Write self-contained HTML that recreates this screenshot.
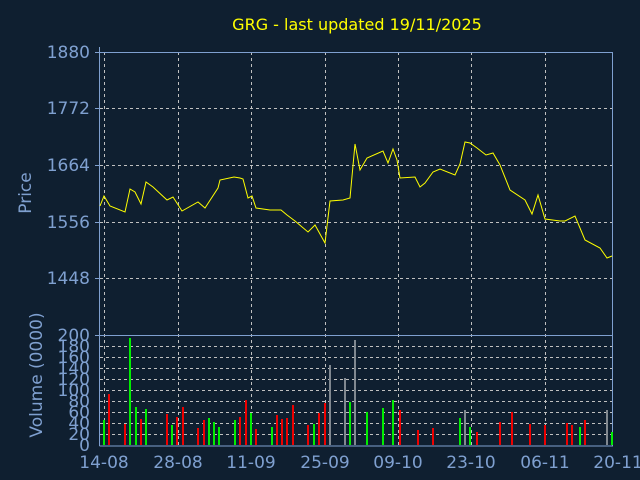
<!DOCTYPE html>
<html><head><meta charset="utf-8"><style>
html,body{margin:0;padding:0;background:#0f1f30;}
svg{display:block}
text{font-family:"DejaVu Sans","Liberation Sans",sans-serif;}
</style></head><body>
<svg width="640" height="480" viewBox="0 0 640 480" xmlns="http://www.w3.org/2000/svg">
<rect width="640" height="480" fill="#0f1f30"/>
<text x="357" y="30" fill="#ffff00" font-size="16" text-anchor="middle">GRG - last updated 19/11/2025</text>
<g stroke="#c0c0c0" stroke-width="1" stroke-dasharray="3,3" fill="none">
<path d="M100 108.5H613M100 165.5H613M100 222.5H613M100 278.5H613"/>
<path d="M100 346.5H613M100 357.5H613M100 368.5H613M100 379.5H613M100 390.5H613M100 401.5H613M100 412.5H613M100 423.5H613M100 434.5H613"/>
<path d="M104.5 52V445M178.5 52V445M251.5 52V445M325.5 52V445M398.5 52V445M471.5 52V445M545.5 52V445"/>
</g>
<g stroke="#7fa0d0" stroke-width="1" fill="none">
<path d="M99.5 47V446M99.5 446H613M99.5 335.5H613M99.5 52.5H613M612.5 52V446"/>
<path d="M95 52.5H100M95 108.5H100M95 165.5H100M95 222.5H100M95 278.5H100M95 335.5H100"/>
</g>
<g fill="#7fa0d0" font-size="17" text-anchor="end">
<text x="90" y="58">1880</text><text x="90" y="114">1772</text><text x="90" y="171">1664</text><text x="90" y="228">1556</text><text x="90" y="284">1448</text><text x="90" y="341">200</text>
<text x="90" y="352">180</text><text x="90" y="363">160</text><text x="90" y="374">140</text><text x="90" y="385">120</text><text x="90" y="396">100</text><text x="90" y="407">80</text><text x="90" y="418">60</text><text x="90" y="429">40</text><text x="90" y="440">20</text><text x="90" y="451">0</text>
</g>
<g fill="#7fa0d0" font-size="17" text-anchor="middle">
<text x="104" y="468">14-08</text><text x="178" y="468">28-08</text><text x="251" y="468">11-09</text><text x="325" y="468">25-09</text><text x="398" y="468">09-10</text><text x="471" y="468">23-10</text><text x="545" y="468">06-11</text><text x="618" y="468">20-11</text>
</g>
<text transform="translate(31,193) rotate(-90)" fill="#7fa0d0" font-size="17" text-anchor="middle">Price</text>
<text transform="translate(42,375) rotate(-90)" fill="#7fa0d0" font-size="17" text-anchor="middle">Volume (0000)</text>
<polyline fill="none" stroke="#ffff00" stroke-width="1" points="100,206 104,196 110,206 125,212 130,189 135,192 141,204 146,182 153,187 167,200 173,197 182,211 198,202 205,208 218,188 220,180 234,177 240,178 243,179 248,198 252,196 256,208 270,210 281,210 287,215 295,221 308,232 315,225 325,243 330,201 343,200 350,198 355,144 360,170 367,158 383,151 388,163 393,149 397,160 400,178 415,177 420,187 425,183 433,172 440,169 455,175 460,164 465,142 470,143 477,148 486,155 493,153 500,165 510,190 525,200 532,214 538,195 545,219 560,221 565,221 575,216 585,240 600,248 607,258 612,256"/>
<g stroke-width="2">
<path stroke="#00ee00" d="M104 445V420M130 445V338M136 445V407M146 445V409M172 445V425M209 445V418M214 445V422M219 445V427M235 445V420M251 445V413M272 445V427M314 445V424M350 445V402M367 445V412M383 445V408M393 445V400M460 445V418M470 445V427M580 445V427M612 445V432"/>
<path stroke="#ee0000" d="M109 445V394M125 445V424M141 445V419M167 445V414M177 445V417M183 445V407M198 445V428M204 445V420M240 445V417M246 445V400M256 445V429M277 445V415M282 445V419M287 445V418M293 445V405M308 445V425M319 445V413M325 445V403M400 445V410M418 445V430M433 445V428M477 445V432M500 445V422M512 445V412M530 445V424M545 445V425M567 445V423M572 445V425M585 445V420"/>
<path stroke="#808890" d="M330 445V365M345 445V378M355 445V340M465 445V410M607 445V410"/>
</g>
</svg>
</body></html>
